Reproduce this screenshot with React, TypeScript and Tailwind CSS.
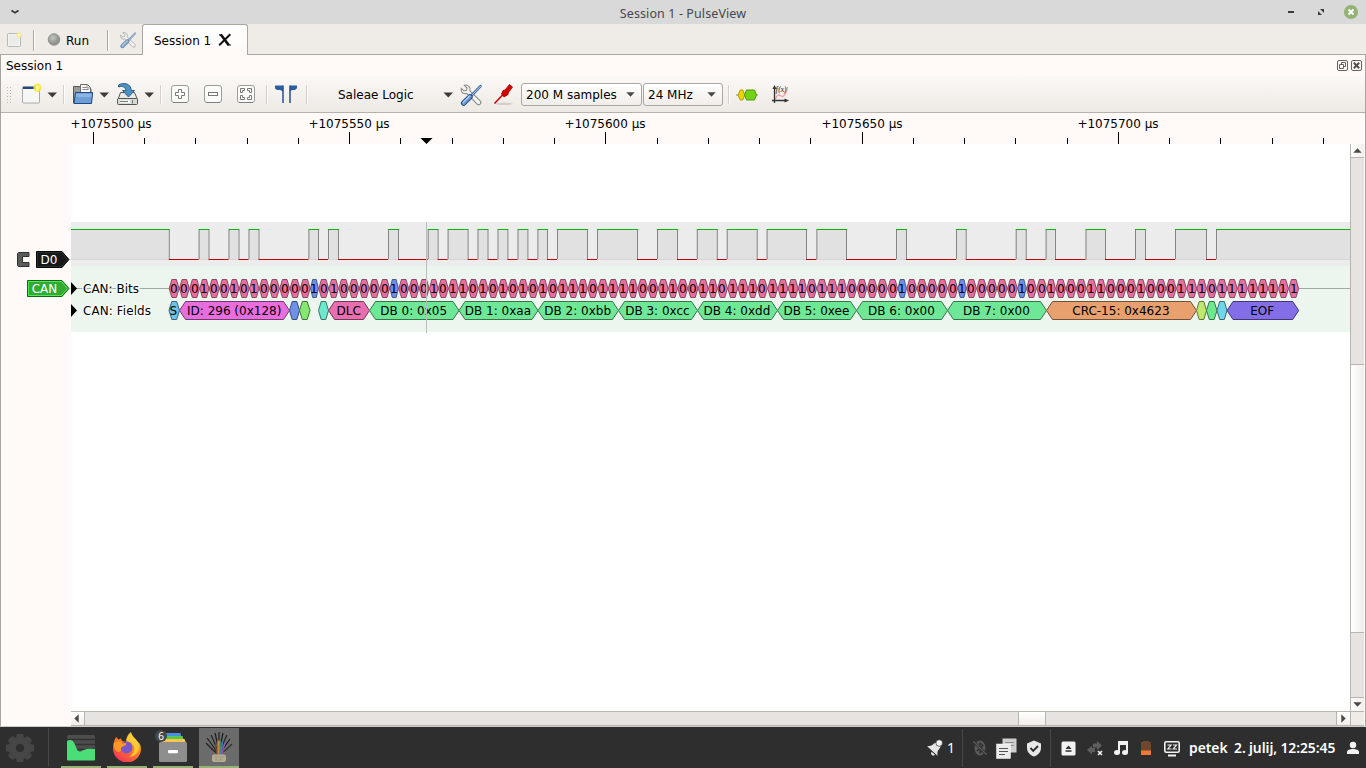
import React from "react";

const UI = "font-['DejaVu_Sans',sans-serif]";

/* ---------- small shared pieces ---------- */

const Arrow = () => (
  <svg width="12" height="24" viewBox="0 0 12 24" className="shrink-0">
    <path d="M1.5 9.5h9.5l-4.7 5z" fill="#3c3b39" />
  </svg>
);

const Sep = ({ className = "" }: { className?: string }) => (
  <div className={`h-[19px] w-px shrink-0 bg-[#d3d0cc] shadow-[1px_0_0_#fff] ${className}`} />
);

const ToolsIcon = ({ size, className = "" }: { size: number; className?: string }) => (
  <svg width={size} height={size} viewBox="0 0 24 24" className={`shrink-0 ${className}`}>
    <path
      d="M5.2 2.2 8 5l-.5 2.3L5 8 2.2 5.4C1.6 8 3 10.8 6 10.8l1.7-.4L17.6 20.6c.8 1 2.2 1.4 3.4.6 1.1-1 1-2.5.2-3.4L11 7.8c.7-3.2-1.7-6.5-5.8-5.6z"
      fill="#f4f4f2"
      stroke="#8b8d89"
      strokeWidth="1.1"
    />
    <path d="M21.5 3.2 13 12" stroke="#3b6ba5" strokeWidth="2.6" strokeLinecap="round" />
    <path d="M21.5 3.2 13 12" stroke="#b9d0ea" strokeWidth="1" strokeLinecap="round" />
    <path d="M11 13.8 4.6 20.2" stroke="#204a87" strokeWidth="5.4" strokeLinecap="round" />
    <path d="M11 13.8 4.6 20.2" stroke="#6d9bd0" strokeWidth="3.4" strokeLinecap="round" />
    <path d="M10.5 13 4 19.6" stroke="#b8d0ea" strokeWidth="1.1" strokeLinecap="round" />
  </svg>
);

const BoxIcon = ({ children, className = "" }: { children: React.ReactNode; className?: string }) => (
  <svg width="24" height="24" viewBox="0 0 24 24" className={`shrink-0 ${className}`}>
    <rect x="3.5" y="3.5" width="17" height="17" rx="2.5" fill="#fbfbfa" stroke="#9b9d98" />
    <path d="M5 20.5h14" stroke="#7c7e79" />
    {children}
  </svg>
);

/* ---------- title bar and session tabs ---------- */

function TitleBar() {
  return (
    <div className="flex h-6 shrink-0 items-center bg-[#d9d9d9] px-[10px]">
      <svg width="10" height="8" viewBox="0 0 10 8">
        <path d="M1.5 2.5 5 4.7l3.5-2.2" stroke="#3a3a3a" strokeWidth="1.9" fill="none" />
      </svg>
      <div className="mt-[4px] flex-1 text-center font-['Noto_Sans',sans-serif] text-[12.5px] leading-none tracking-[0.1px] text-[#484848]">
        Session 1 - PulseView
      </div>
      <div className="w-[10px]" />
    </div>
  );
}

function WindowButtons() {
  return (
    <svg width="80" height="24" viewBox="0 0 80 24" className="absolute top-0 right-0">
      <rect x="2" y="11" width="6" height="2" fill="#3a3a3a" />
      <path d="M34 9h4v4zM32 11v4h4z" fill="#3a3a3a" />
      <circle cx="65" cy="12" r="7" fill="#92b372" />
      <path d="m62.5 9.5 5 5m0-5-5 5" stroke="#fff" strokeWidth="2" />
    </svg>
  );
}

function TabBar() {
  return (
    <div className="flex h-[31px] shrink-0 items-stretch border-b border-[#aaa6a2] bg-[#efebe7] text-[12px] text-black">
      <div className="flex w-[142px] items-center pt-[2px]">
        <svg width="18" height="18" viewBox="0 0 18 18" className="ml-[6px] shrink-0">
          <rect x="1.5" y="2.5" width="13" height="13" rx="1" fill="#f4f4f3" stroke="#b9b9b4" />
          <rect x="3" y="4" width="10" height="10" fill="#ececea" />
          <circle cx="13" cy="4" r="2.6" fill="#f6ec7a" opacity=".85" />
          <circle cx="13" cy="4" r="1.2" fill="#fffbd0" />
        </svg>
        <div className="ml-[9px] h-[21px] w-px bg-[#aaa6a2] shadow-[1px_0_0_#fff]" />
        <svg width="14" height="14" viewBox="0 0 14 14" className="ml-[13px] shrink-0">
          <defs>
            <radialGradient id="ball" cx="40%" cy="35%">
              <stop offset="0" stopColor="#c4c8c2" />
              <stop offset="1" stopColor="#8f938d" />
            </radialGradient>
          </defs>
          <circle cx="7" cy="6.5" r="5.8" fill="url(#ball)" stroke="#868983" strokeWidth=".8" />
        </svg>
        <span className="mt-px ml-[5px] w-[26px] leading-none">Run</span>
        <div className="ml-[15px] h-[21px] w-px bg-[#aaa6a2] shadow-[1px_0_0_#fff]" />
        <ToolsIcon size={18} className="ml-[11px] opacity-70" />
      </div>
      <div className="-mb-px flex w-[106px] items-center rounded-t-[3px] border border-b-0 border-[#aaa6a2] bg-gradient-to-b from-white to-[#fff9f7] pt-px pl-[11px]">
        <span className="w-[58px] leading-none whitespace-nowrap">Session 1</span>
        <svg width="14" height="14" viewBox="0 0 14 14" className="-mt-px ml-[6px] shrink-0">
          <path d="M2.8 1.5 10.8 12.3" stroke="#111" strokeWidth="2.6" />
          <path d="M12.3 1.2 7 6.5 1.2 12.3" stroke="#111" strokeWidth="2" fill="none" />
          <path d="M9.5 12h3.5M1 1.8h3" stroke="#111" strokeWidth="1.2" />
        </svg>
      </div>
    </div>
  );
}

/* ---------- dock title and tool bar ---------- */

function DockTitle() {
  return (
    <div className="flex h-[21px] shrink-0 items-center justify-between pr-[3px] pl-[5px] text-[12px] leading-none text-black">
      <span>Session 1</span>
      <div className="flex gap-[3px]">
        <svg width="11" height="11" viewBox="0 0 11 11">
          <rect x=".5" y=".5" width="10" height="10" rx="1.5" fill="none" stroke="#66635f" />
          <path d="M4.5 4V2.5h4v4H7M2.5 4.5h4v4h-4z" fill="none" stroke="#66635f" />
        </svg>
        <svg width="11" height="11" viewBox="0 0 11 11">
          <rect x=".5" y=".5" width="10" height="10" rx="1.5" fill="none" stroke="#66635f" />
          <path d="m2.8 2.8 5.4 5.4m0-5.4L2.8 8.2" stroke="#55524e" strokeWidth="2" />
        </svg>
      </div>
    </div>
  );
}

const Combo = ({ label, className }: { label: string; className: string }) => (
  <div
    className={`flex h-[23px] shrink-0 items-center justify-between rounded-[3px] border border-[#aaa6a2] bg-gradient-to-b from-white to-[#f1eeea] pr-[6px] pl-1 leading-none ${className}`}
  >
    <span className="whitespace-nowrap">{label}</span>
    <svg width="9" height="5" viewBox="0 0 9 5">
      <path d="M.3.2h8.4L4.5 4.7z" fill="#4b4946" />
    </svg>
  </div>
);

function ToolBar() {
  return (
    <div className="flex h-[37px] shrink-0 items-center border-b border-[#b5b1ad] bg-gradient-to-b from-[#fbf8f5] to-[#edeae6] pt-px text-[12px] text-black">
      <svg width="8" height="20" viewBox="0 0 8 20" className="ml-[5px] shrink-0">
        {[2, 5, 8, 11, 14, 17].map((y) => (
          <path key={y} d={`M1 ${y}.5h1M4 ${y}.5h1`} stroke="#bdb9b5" strokeWidth="1" />
        ))}
      </svg>
      <svg width="24" height="24" viewBox="0 0 24 24" className="ml-[5px] shrink-0">
        <rect x="3.5" y="3.5" width="17" height="16.5" rx="1" fill="#f6f6f4" stroke="#a9aaa5" />
        <path d="M4 5h14" stroke="#204a87" strokeWidth="2.4" />
        <path d="M4 6.500h16" stroke="#fff" strokeWidth=".8" />
        <circle cx="18.5" cy="4.8" r="4.2" fill="#f5ea2a" opacity=".8" />
        <circle cx="18.5" cy="4.8" r="2" fill="#fff89a" />
      </svg>
      <div className="ml-[3px] shrink-0"><Arrow /></div>
      <Sep className="ml-[5px]" />
      <svg width="24" height="24" viewBox="0 0 24 24" className="ml-[7px] shrink-0">
        <path d="M2.5 20V3.500h6L10 6h10v14z" fill="#9a9c97" stroke="#555753" />
        <path d="M9.5 11V1.500h7l3 3V11z" fill="#fafafa" stroke="#6b6d69" />
        <path d="M11.5 4.500h4M11.500 6.500h6M16 2v3h3" stroke="#8a8c87" fill="none" />
        <path d="M4.5 9.500h17.200L20.500 20.500H3z" fill="#6d9fd6" stroke="#204a87" />
        <path d="M5.5 10.700h15l-.3 3.300H5.200z" fill="#9cc0e8" opacity=".7" />
      </svg>
      <div className="ml-[3px] shrink-0"><Arrow /></div>
      <svg width="24" height="24" viewBox="0 0 24 24" className="ml-[6px] shrink-0">
        <path d="M4.5 9.500h14l3 7H2z" fill="#e9e9e6" stroke="#555753" />
        <rect x="1.5" y="15.5" width="20" height="6" rx="1" fill="#d7d9d4" stroke="#555753" />
        <path d="M4 18.500h10" stroke="#fff" strokeWidth="2.5" />
        <path d="M4 18.500h8M16.500 17v3.500" stroke="#777975" />
        <path
          d="M2.5 2C8-1 15 .5 15.300 7.500h3.200L12.500 14 6.500 7.500h3.300C10 5 7 2.300 2.500 4z"
          fill="#4e90c0"
          stroke="#2a5f8f"
        />
      </svg>
      <div className="ml-[3px] shrink-0"><Arrow /></div>
      <Sep className="ml-[5px]" />
      <BoxIcon className="ml-[7px] -mt-px">
        <path d="M10.5 7.500h3v3h3v3h-3v3h-3v-3h-3v-3h3z" fill="#fff" stroke="#777975" />
      </BoxIcon>
      <BoxIcon className="ml-[9px] -mt-px">
        <rect x="7.5" y="10.5" width="9" height="3" fill="#fff" stroke="#777975" />
      </BoxIcon>
      <BoxIcon className="ml-[9px] -mt-px">
        <path
          d="M6.500 10.500v-4h4v2h-2v2zM13.500 6.500h4v4h-2v-2h-2zM6.500 13.500h2v2h2v2h-4zM17.500 13.500v4h-4v-2h2v-2z"
          fill="#fff"
          stroke="#777975"
        />
      </BoxIcon>
      <Sep className="ml-[8px]" />
      <svg width="24" height="24" viewBox="0 0 24 24" className="ml-[8px] shrink-0">
        <path d="M0 2.500h8.500V20h-1V8.500L5.500 7H2L0 5.500zM22 2.500h-7.500V20h1V8.500L17 7h3l2-1.700z" fill="#2a5ea5" />
        <path d="M8 2.500V20M15 2.500V20" stroke="#204a87" />
      </svg>
      <Sep className="ml-[7px]" />
      <span className="ml-[31px] w-[104px] shrink-0 leading-none">Saleae Logic</span>
      <Arrow />
      <ToolsIcon size={24} className="ml-[5px]" />
      <svg width="24" height="24" viewBox="0 0 24 24" className="ml-[9px] shrink-0">
        <ellipse cx="12" cy="20.8" rx="9" ry="1.2" fill="#c9b9b5" opacity=".6" />
        <path d="M2.5 20.500 12 10.500" stroke="#b00" strokeWidth="1.5" />
        <path d="m9.500 11 1.500-3.500 2-.5 4.500-5.500 3 2.500-4 5.500-.5 2-4 2.500z" fill="#d40000" stroke="#a40000" strokeWidth=".8" />
      </svg>
      <Combo label="200 M samples" className="ml-[5px] w-[121px]" />
      <Combo label="24 MHz" className="ml-px w-[80px]" />
      <Sep className="ml-[5px]" />
      <svg width="24" height="24" viewBox="0 0 24 24" className="ml-[6px] shrink-0">
        <path d="M1 12h22" stroke="#888a85" />
        <path d="m3 12 2.300-5h2.500l2 5-2 5H5.300z" fill="#edd400" stroke="#b59a00" />
        <path d="m9.500 12 2-5h8l2 5-2 5h-8z" fill="#73d216" stroke="#4e9a06" />
      </svg>
      <svg width="24" height="24" viewBox="0 0 24 24" className="ml-[10px] shrink-0">
        <path d="M6.500 16c3-8 5.500-1 8-3s3.500-6 4-9" stroke="#f29a9a" strokeWidth="1.3" fill="none" />
        <path d="M5.500 5v12.500H18M3 17.500h3M5.500 17v3" stroke="#2e3436" strokeWidth="1.3" fill="none" />
        <path d="m3.500 6 2-4 2 4zM15.500 15.500l4.500 2-4.500 2z" fill="#2e3436" />
        <text x="6.5" y="8.5" fontSize="7.5" fontStyle="italic" fontWeight="bold" fill="#555" fontFamily="Liberation Serif, serif">
          f(x)
        </text>
      </svg>
    </div>
  );
}

/* ---------- trace view ---------- */

const LEFT = 71;
const TICKS = [
  93, 144, 195, 247, 298, 349, 400, 452, 503, 554, 605, 657, 708, 759, 810, 862, 913, 964, 1015, 1067,
  1118, 1169, 1220, 1272, 1323,
];
const MAJOR = ["+1075500 µs", "+1075550 µs", "+1075600 µs", "+1075650 µs", "+1075700 µs"];

function Ruler() {
  return (
    <svg width="1294" height="31" viewBox="71 113 1294 31" className="ml-[70px] block shrink-0">
      {TICKS.map((x, k) => (
        <rect key={x} x={x} y={k % 5 ? 138 : 132} width="1" height={k % 5 ? 6 : 12} fill="#000" />
      ))}
      {MAJOR.map((t, i) => (
        <text
          key={t}
          x={i ? TICKS[i * 5] : 111}
          y="128"
          textAnchor="middle"
          fontSize="12"
          fontFamily="DejaVu Sans, sans-serif"
        >
          {t}
        </text>
      ))}
      <path d="M420.5 138h12l-6 6z" fill="#000" />
    </svg>
  );
}

/* High periods of D0 after the initial idle level: [rise, fall]. */
const PULSES: [number, number][] = [
  [198.6, 208.5], [228.5, 238.5], [248.5, 258.5], [308.4, 318], [328, 338], [388, 398], [427.7, 437.6], [447.6, 467.6],
  [477.5, 487.5], [497.5, 507.4], [517.5, 527.4], [537.4, 547], [557, 587], [597, 637], [657, 677], [696.8, 716.8],
  [726.7, 756.7], [766.6, 806], [816.4, 846], [896, 906], [956, 965.7], [1015.7, 1025.7], [1045.6, 1055],
  [1085.5, 1105], [1135, 1145], [1175, 1206],
];
const LAST_RISE = 1216;
const STUFF = [14, 22, 73, 79, 85];
const BIT = 10.25;

/* The decoder resynchronises its bit clock on every falling edge. */
function decodeBits() {
  const out: { x: number; end: number; v: number }[] = [];
  let start = 169;
  const falls = PULSES.map((p) => p[1] + 0.6);
  PULSES.forEach(([rise], i) => {
    const stop = falls[i];
    const total = Math.round((stop - start) / 9.97);
    const zeros = Math.round((rise - start) / 9.97);
    for (let k = 0; k < total; k++) {
      const x = start + k * BIT;
      out.push({ x, end: k === total - 1 ? stop : x + BIT, v: k < zeros ? 0 : 1 });
    }
    start = stop;
  });
  for (let k = 0; k < 9; k++) out.push({ x: start + k * BIT, end: start + (k + 1) * BIT, v: k ? 1 : 0 });
  return out;
}
const BITS = decodeBits();

const FIELDS: [number, number, string, string, string][] = [
  [169, 179.5, "S", "#70c4e8", "#38627a"],
  [179.5, 289.5, "ID: 296 (0x128)", "#e86ee0", "#743770"],
  [289.5, 299.5, "", "#6e92e8", "#374974"],
  [299.5, 310, "", "#84e86e", "#427437"],
  [318.5, 328.5, "", "#6ee8cc", "#377466"],
  [328.5, 369.5, "DLC", "#e86eae", "#743757"],
  [369.5, 459, "DB 0: 0x05", "#6ee896", "#37744b"],
  [459, 538, "DB 1: 0xaa", "#6ee896", "#37744b"],
  [538, 618.5, "DB 2: 0xbb", "#6ee896", "#37744b"],
  [618.5, 697.5, "DB 3: 0xcc", "#6ee896", "#37744b"],
  [697.5, 777.5, "DB 4: 0xdd", "#6ee896", "#37744b"],
  [777.5, 856.5, "DB 5: 0xee", "#6ee896", "#37744b"],
  [856.5, 947.5, "DB 6: 0x00", "#6ee896", "#37744b"],
  [947.5, 1046.5, "DB 7: 0x00", "#6ee896", "#37744b"],
  [1046.5, 1196.5, "CRC-15: 0x4623", "#e8a06e", "#745037"],
  [1196.5, 1206.5, "", "#c0e86e", "#607437"],
  [1206.5, 1217, "", "#6ee88e", "#377447"],
  [1217, 1227, "", "#6ed6e8", "#376b74"],
  [1227, 1298.7, "EOF", "#846ee8", "#423774"],
];

const hex = (a: number, b: number, top: number, bottom: number) => {
  const n = Math.min(6, (b - a) * 0.27);
  const m = (top + bottom) / 2;
  return `${a},${m} ${a + n},${top} ${b - n},${top} ${b},${m} ${b - n},${bottom} ${a + n},${bottom}`;
};

function wave() {
  const highs: [number, number][] = [[LEFT, 168.8], ...PULSES, [LAST_RISE, 1350]];
  return highs.map(([a, b], i) => {
    const next = highs[i + 1];
    return (
      <g key={a}>
        <rect x={a} y="229" width={b - a} height="30" fill="#e1e1e1" />
        <rect x={a} y="259" width={b - a} height="1" fill="#d6d6d6" />
        {i > 0 && <rect x={a} y="230" width="1" height="29" fill="#848484" />}
        {next && <rect x={b} y="230" width="1" height="29" fill="#848484" />}
        <rect x={a} y="229" width={b - a + (next ? 1 : 0)} height="1" fill="#00b800" />
        {next && <rect x={b} y="259" width={next[0] - b + 1} height="1" fill="#c00000" />}
      </g>
    );
  });
}

function Traces() {
  const halo = { paintOrder: "stroke" as const };
  return (
    <svg
      width="1279"
      height="567"
      viewBox="71 144 1279 567"
      className="block shrink-0 bg-white"
      fontSize="12"
      fontFamily="DejaVu Sans, sans-serif"
    >
      <rect x="71" y="222" width="1279" height="44" fill="#ececec" />
      <rect x="71" y="266" width="1279" height="66" fill="#edf6ee" />
      {wave()}
      <rect x="71" y="288" width="98" height="1" fill="#a3aaa4" />
      <rect x="1299" y="288" width="51" height="1" fill="#a3aaa4" />
      <path d="M71 282l6 6.500-6 6.500zM71 304l6 6.500-6 6.500z" fill="#000" />
      <text x="83" y="293" stroke="#f7fbf7" strokeWidth="3" style={halo}>CAN: Bits</text>
      <path d="M109 288.500h5M140 288.500h28" stroke="#a3aaa4" opacity=".6" />
      <text x="83" y="315" stroke="#f7fbf7" strokeWidth="3" style={halo} textLength="68">CAN: Fields</text>
      {BITS.map((b, i) => {
        const stuff = STUFF.includes(i);
        return (
          <g key={i}>
            <polygon
              points={hex(b.x + 0.2, b.end - 0.2, 279.5, 297.5)}
              fill={stuff ? "#6e8ee8" : "#e86ea0"}
              stroke={stuff ? "#374774" : "#743750"}
              strokeWidth=".85"
            />
            <text x={Math.round((b.x + b.end) / 2 - 4.1)} y="293">{b.v}</text>
          </g>
        );
      })}
      {FIELDS.map(([a, b, t, fill, line]) => (
        <g key={a}>
          <polygon points={hex(a, b, 301.5, 319.5)} fill={fill} stroke={line} />
          {t && <text x={(a + b) / 2 - (t === "ID: 296 (0x128)" || t === "DLC" ? 0.3 : t === "S" ? 1 : 0.6)} y="315" textAnchor="middle">{t}</text>}
        </g>
      ))}
      <rect x="426" y="222" width="1" height="111" fill="#bdbdbd" />
    </svg>
  );
}

function TraceLabels() {
  return (
    <div className="flex w-[70px] shrink-0 flex-col items-end pt-[105px] pr-px text-[12px]">
      <svg width="54" height="20" viewBox="16 249 54 20" className="block" fontFamily="DejaVu Sans, sans-serif" fontSize="12">
        <path d="M29 252.500H18.500l-1 1v12l1 1H29v-4h-6.500v-6H29z" fill="#5a5c5a" stroke="#2e3436" strokeWidth="1" />
        <path d="M36.5 251.500h25.500l7 8-7 8H36.500z" fill="#16191a" stroke="#050606" />
        <path d="M37.5 252.500h24l6 7-6 7h-24z" fill="none" stroke="#32383a" strokeWidth=".7" />
        <text x="49" y="264" textAnchor="middle" fill="#fff">D0</text>
      </svg>
      <svg width="44" height="20" viewBox="26 278 44 20" className="mt-[9px] block" fontFamily="DejaVu Sans, sans-serif" fontSize="12">
        <path d="M27.5 280.500h34.500l7 8-7 8H27.500z" fill="#33ab33" stroke="#0f6a0f" />
        <path d="M28.5 281.500h33l6 7-6 7h-33z" fill="none" stroke="#55e855" />
        <text x="44.5" y="293" textAnchor="middle" fill="#fff">CAN</text>
      </svg>
    </div>
  );
}

function VScroll() {
  return (
    <div className="flex h-full w-[14px] shrink-0 flex-col border-l border-[#b8b5b0] bg-[#e7e3e0]">
      <div className="flex h-[14px] items-center justify-center border-b border-[#b8b5b0] bg-gradient-to-r from-white to-[#f1eeea] pr-px">
        <svg width="9" height="5" viewBox="0 0 9 5"><path d="M.3 4.700h8.400L4.500.3z" fill="#4b4946" /></svg>
      </div>
      <div className="h-[206px]" />
      <div className="h-[269px] border-y border-[#b8b5b0] bg-gradient-to-r from-white to-[#f0eeea]" />
      <div className="flex-1" />
      <div className="flex h-[14px] items-center justify-center border-t border-[#b8b5b0] bg-gradient-to-r from-white to-[#f1eeea] pr-px">
        <svg width="9" height="5" viewBox="0 0 9 5"><path d="M.3.300h8.400L4.500 4.700z" fill="#4b4946" /></svg>
      </div>
    </div>
  );
}

function HScroll() {
  return (
    <div className="ml-[70px] flex h-[15px] w-[1293px] shrink-0 border-y border-[#b8b5b0] bg-[#e7e3e0]">
      <div className="flex w-[14px] items-center justify-center border-r border-[#b8b5b0] bg-gradient-to-b from-white to-[#f1eeea] pr-[2px]">
        <svg width="5" height="9" viewBox="0 0 5 9"><path d="M4.700.3v8.400L.3 4.500z" fill="#4b4946" /></svg>
      </div>
      <div className="w-[933px]" />
      <div className="w-[28px] border-x border-[#b8b5b0] bg-gradient-to-b from-white to-[#f0eeea]" />
      <div className="flex-1" />
      <div className="flex w-[14px] items-center justify-center border-l border-[#b8b5b0] bg-gradient-to-b from-white to-[#f1eeea]">
        <svg width="5" height="9" viewBox="0 0 5 9"><path d="M.3.300v8.400L4.700 4.500z" fill="#4b4946" /></svg>
      </div>
      <div className="w-[14px] border-l border-[#b8b5b0] bg-[#efebe7]" />
    </div>
  );
}

/* ---------- desktop panel ---------- */

const Task = ({ active = false, children }: { active?: boolean; children: React.ReactNode }) => (
  <div className={`flex h-[40px] w-10 shrink-0 items-center justify-center border-b-2 border-[#8fb571] ${active ? "bg-[#6b6b6b]" : ""}`}>
    {children}
  </div>
);

const teeth = [0, 45, 90, 135, 180, 225, 270, 315];
const WIRES: [number, number, string][] = [
  [3, 12, "#222"], [4, 7, "#1b1b1b"], [8, 4, "#222"], [12, 2, "#1b1b1b"], [16, 1, "#222"],
  [20, 2, "#1b1b1b"], [24, 4, "#222"], [27, 8, "#1b1b1b"], [29, 13, "#333"],
];

function Panel() {
  return (
    <div className="flex h-[41px] shrink-0 items-end bg-[#2e2e2e] text-white">
      <div className="flex h-[40px] w-[48px] shrink-0 items-center">
        <svg width="28" height="28" viewBox="-14 -14 28 28" className="ml-[6px]">
          {teeth.map((a) => (
            <path key={a} d="M-4.500-9-3-14h6L4.500-9z" fill="#464646" transform={`rotate(${a})`} />
          ))}
          <circle r="7.3" fill="none" stroke="#464646" strokeWidth="6.5" />
        </svg>
      </div>
      <div className="mb-[2px] h-[38px] w-px shrink-0 bg-[#484848]" />
      <div className="ml-[12px] flex gap-[6px]">
        <Task>
          <svg width="28" height="26" viewBox="0 0 28 26" className="mt-px">
            <rect width="28" height="25" rx="1.5" fill="#4d4d4d" />
            <path d="M0 4.500h28M0 9.500h28M0 14.500h28" stroke="#333" strokeWidth="1.5" />
            <path d="M0 6.500C4 3 7 6 9 12s4 5 8 3 8-1 11-1v10.500a1 1 0 0 1-1 1H1a1 1 0 0 1-1-1z" fill="#4ade78" />
          </svg>
        </Task>
        <Task>
          <svg width="30" height="30" viewBox="0 0 30 30" className="-mt-px">
            <defs>
              <linearGradient id="fox" x1="1" y1="0" x2="0.3" y2="1">
                <stop offset="0" stopColor="#ffd93a" />
                <stop offset=".45" stopColor="#ff8a1e" />
                <stop offset="1" stopColor="#f5335a" />
              </linearGradient>
            </defs>
            <path d="M4 5l2.500 2.500L9 6.500l1 2.500 4 1c0-3 2-7 5-9 1 4 4 5 5.500 8 2 1 4.500 3 4.500 8A14 14 0 0 1 1 16C1 12 2 9 4 5z" fill="url(#fox)" />
            <path d="M19 0c-3 2-5 6-4.500 9 4 0 8 4 8 8-1 4-3 6-5 8 6-1 9.500-5 9.500-10 0-8-7-9-8-15z" fill="#ffd23a" opacity=".85" />
            <circle cx="14.5" cy="15.5" r="6" fill="#7a55cc" />
            <path d="M2 11c3-2 6-2 8 .5l4-.5c1 2-2 3-4 4s0 3-1.500 4C6 22 1 18 2 11z" fill="#ff9a22" />
          </svg>
        </Task>
        <Task>
          <div className="relative -mt-px">
            <svg width="28" height="30" viewBox="0 0 28 30">
              <path d="M6.500 1h15l1 5H5z" fill="#4a90e0" />
              <path d="M5 4h18.500l1.500 5H4z" fill="#57c84d" />
              <path d="M3 7h22.500l1.500 4H2z" fill="#ffc44d" />
              <rect y="10" width="28" height="20" rx="1.5" fill="#8e8e8e" />
              <rect x="9" y="18" width="10" height="3.3" rx="1" fill="#fff" />
            </svg>
            <span className="absolute -top-[2px] -left-[4px] flex size-[12px] items-center justify-center rounded-full bg-[#484848] font-['Noto_Sans',sans-serif] text-[10px] leading-none text-white">
              6
            </span>
          </div>
        </Task>
        <Task active>
          <svg width="32" height="32" viewBox="0 0 32 32">
            {WIRES.map(([x, y, c]) => (
              <path key={x} d={`M${x} ${y}Q${(x + 16) / 2 + (x - 16) * 0.1} ${y + 6} 16 24`} stroke={c} strokeWidth="1.2" fill="none" />
            ))}
            <path d="M14 24q-.5-6-2-11" stroke="#6e4a3c" strokeWidth="1.2" fill="none" />
            <path d="M14.5 24V10" stroke="#b05a3c" strokeWidth="1.4" />
            <path d="M15.8 24V9.500" stroke="#d09a40" strokeWidth="1.4" />
            <path d="M17 24V9.500" stroke="#4caf70" strokeWidth="1.4" />
            <path d="M18 24q.5-8 1.500-13" stroke="#3f7fd0" strokeWidth="1.4" fill="none" />
            <path d="M19 24q1-7 3-12" stroke="#9b4fc0" strokeWidth="1.4" fill="none" />
            <rect x="9" y="23.5" width="14" height="7.5" rx="2" fill="#b5ad94" />
            <path d="M10.500 26h11M12 29h8M13 25v4M18 25v4" stroke="#a0987f" />
          </svg>
        </Task>
      </div>
      <div className="flex h-[40px] flex-1 items-center justify-end font-['Noto_Sans',sans-serif]">
        <svg width="18" height="18" viewBox="0 0 18 18" className="shrink-0">
          <g transform="rotate(42 9 9)">
            <path d="M9 2.500C6 2.500 5.200 5 5.200 7.500c0 2.500-1.200 3.500-3.200 5.500h14c-2-2-3.200-3-3.200-5.500 0-2.500-.8-5-3.800-5z" fill="#e4e4e4" />
            <path d="M9 14h4.500a2.200 2.200 0 0 1-4.500 0z" fill="#e4e4e4" />
          </g>
          <circle cx="13.2" cy="4" r="3.3" fill="#f4f4f4" stroke="#2e2e2e" strokeWidth=".7" />
        </svg>
        <span className="ml-[3px] w-[8px] text-[14px] leading-none">1</span>
        <div className="ml-[7px] h-[38px] w-px bg-[#484848]" />
        <svg width="16" height="18" viewBox="0 0 16 18" className="ml-[9px] shrink-0">
          <ellipse cx="8" cy="9" rx="5.5" ry="7.5" fill="#5a5a5a" />
          <path d="M5 6l6 5.500L8 14V4l3 2.500L5 12" stroke="#2e2e2e" strokeWidth="1.2" fill="none" />
          <path d="M1.500 2.500 14.500 15.500" stroke="#2e2e2e" strokeWidth="2.6" />
          <path d="M1.500 2.500 14.500 15.500" stroke="#5a5a5a" strokeWidth="1.3" />
        </svg>
        <svg width="21" height="21" viewBox="0 0 21 21" className="ml-[8px] shrink-0">
          <rect x="6.5" y=".5" width="14" height="14" fill="#cfcfcf" />
          <path d="M9 4.500h9M9 7.500h9" stroke="#8d8d8d" />
          <rect x=".5" y="6" width="14" height="14.5" fill="#ebebeb" stroke="#fafafa" strokeWidth=".5" />
          <path d="M3 10.500h9M3 13.500h9M3 16.500h6" stroke="#555" />
        </svg>
        <svg width="16" height="17" viewBox="0 0 16 17" className="ml-[9px] shrink-0">
          <path d="M8 .5 15 3.500v4c0 5-3 7.500-7 9-4-1.500-7-4-7-9v-4z" fill="#e8e8e8" />
          <path d="m4.500 8 2.700 2.800L12 6" stroke="#2e2e2e" strokeWidth="1.9" fill="none" />
        </svg>
        <div className="ml-[8px] h-[38px] w-px bg-[#484848]" />
        <svg width="15" height="15" viewBox="0 0 15 15" className="ml-[10px] shrink-0">
          <rect x=".5" y=".5" width="14" height="14" rx="1.5" fill="#f2f2f2" />
          <path d="M4.500 8 7.500 4.500 10.500 8zM4.500 9.300h6v1.400h-6z" fill="#2e2e2e" />
        </svg>
        <svg width="17" height="17" viewBox="0 0 17 17" className="ml-[11px] shrink-0">
          <path d="M6 3.500h4V1l5 4.500-5 4.500V7.500H6zM8 8H5V5.500L0 10l5 4.500V12h3z" fill="#5e5e5e" />
          <path d="m11 11 4 4m0-4-4 4" stroke="#f2f2f2" strokeWidth="1.6" />
        </svg>
        <svg width="16" height="16" viewBox="0 0 16 16" className="ml-[9px] shrink-0">
          <path d="M5 1h10v11h-2V5H7v8H5z" fill="#f2f2f2" />
          <ellipse cx="4" cy="12.5" rx="3" ry="2.5" fill="#f2f2f2" />
          <ellipse cx="12" cy="12.5" rx="3" ry="2.5" fill="#f2f2f2" />
        </svg>
        <svg width="12" height="16" viewBox="0 0 12 16" className="ml-[11px] shrink-0">
          <path d="M1 2h2V1h6v1h2v13H1z" fill="#71462f" />
          <path d="M1 10.500h10V15H1z" fill="#f27835" />
        </svg>
        <svg width="18" height="17" viewBox="0 0 18 17" className="ml-[11px] shrink-0">
          <rect x="1.8" y="1.8" width="14.4" height="10.4" rx="1.5" fill="none" stroke="#f2f2f2" strokeWidth="1.6" />
          <path d="M4.500 5h3.500L4.800 9H8.500M10 5h3.500L10.300 9H14" stroke="#f2f2f2" strokeWidth="1.2" fill="none" />
          <path d="M5 15.500h8" stroke="#f2f2f2" strokeWidth="2" />
        </svg>
        <span className="ml-[8px] w-[148px] text-[13.9px] leading-none font-semibold tracking-[-0.050px] [word-spacing:-0.3px] whitespace-pre">
          petek  2. julij, 12:25:45
        </span>
        <svg width="14" height="14" viewBox="0 0 14 14" className="mr-[6px] ml-[9px] shrink-0">
          <circle cx="7" cy="4" r="3.2" fill="#f2f2f2" />
          <path d="M1 13V11c0-2 3-3 6-3s6 1 6 3v2z" fill="#f2f2f2" />
        </svg>
      </div>
    </div>
  );
}

export default function App() {
  return (
    <div className={`relative flex h-[768px] w-[1366px] flex-col overflow-hidden bg-[#fff9f7] ${UI}`}>
      <TitleBar />
      <WindowButtons />
      <TabBar />
      <div className="flex h-[671px] shrink-0 flex-col overflow-hidden border-x border-[#a8a4a0]">
        <DockTitle />
        <ToolBar />
        <Ruler />
        <div className="flex h-[567px] shrink-0">
          <TraceLabels />
          <Traces />
          <VScroll />
        </div>
        <HScroll />
      </div>
      <div className="h-px shrink-0 bg-[#cfccc8]" />
      <Panel />
    </div>
  );
}
